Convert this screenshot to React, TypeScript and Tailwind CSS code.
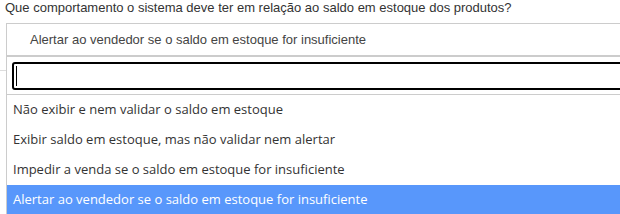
const options = [
  "Não exibir e nem validar o saldo em estoque",
  "Exibir saldo em estoque, mas não validar nem alertar",
  "Impedir a venda se o saldo em estoque for insuficiente",
  "Alertar ao vendedor se o saldo em estoque for insuficiente",
];

const selected = options[3];

export default function App() {
  return (
    <div className="relative h-[214px] w-[620px] overflow-hidden bg-white">
      {/* stray border from the field underneath */}
      <div className="absolute left-0 top-[70px] h-px w-[6px] bg-[#ddd]" />

      <p className="pl-[5px] font-['Liberation_Sans',Arial,sans-serif] text-[13px] leading-[16px] text-[#333]">
        Que comportamento o sistema deve ter em relação ao saldo em estoque dos produtos?
      </p>

      <div className="ml-[6px] mt-[7px] w-[660px] border-l border-t border-[#ccc]">
        {/* current selection */}
        <div className="flex h-[32px] items-center border-b border-[#ccc] pl-[23px] font-['Liberation_Sans',Arial,sans-serif] text-[13px] text-[#444]">
          {selected}
        </div>

        {/* search field */}
        <div className="border-b border-t border-[#ccc] px-[5px] pb-[4px] pt-[5px]">
          <div className="flex h-[28px] items-center rounded-[3px] border-2 border-black pl-[2px]">
            <span className="h-[20px] w-px bg-black" />
          </div>
        </div>

        {/* results */}
        <ul className="font-['Open_Sans','Noto_Sans',sans-serif] text-[13px] text-[#333]">
          {options.map((o) => (
            <li
              key={o}
              className={`flex h-[30px] items-center pl-[6px] ${
                o === selected ? "bg-[#5897fb] text-white" : ""
              }`}
            >
              {o}
            </li>
          ))}
        </ul>
      </div>
    </div>
  );
}
